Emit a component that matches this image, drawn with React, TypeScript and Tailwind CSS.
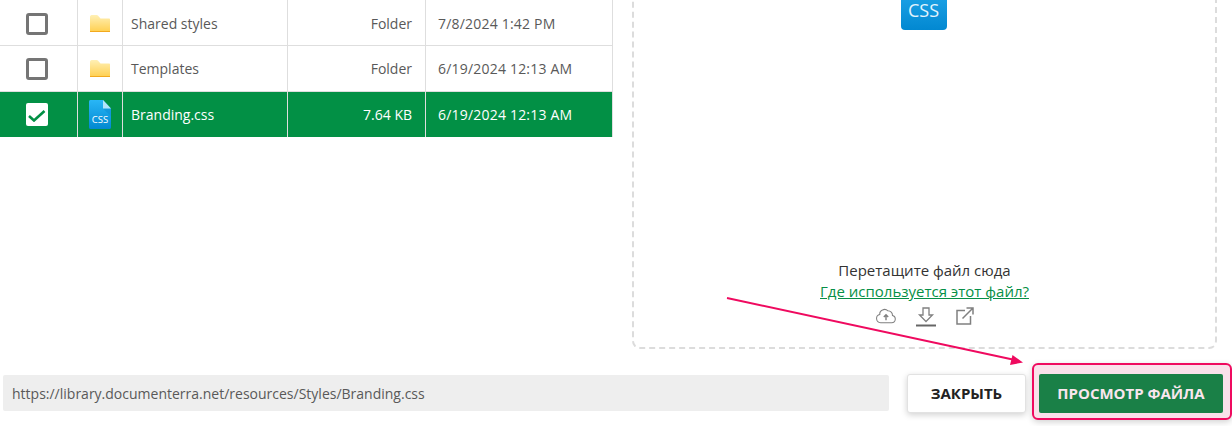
import { ReactNode } from "react";

const font = { fontFamily: '"Open Sans", "Noto Sans", sans-serif' };

function FolderIcon() {
  return (
    <svg width="20" height="17" viewBox="0 0 20 17">
      <defs>
        <linearGradient id="folderFill" x1="0" y1="0" x2="0" y2="1">
          <stop offset="0" stopColor="#fff0b5" />
          <stop offset="1" stopColor="#ffcf4f" />
        </linearGradient>
      </defs>
      <path d="M0 2C0 1 .6 0 1.600 0h5.200c.5 0 .8.2 1.100.5L10.500 3.500H19c.6 0 1 .4 1 1V16c0 .6-.4 1-1 1H1c-.6 0-1-.4-1-1z" fill="url(#folderFill)" />
      <path d="M0 16h20v1H0z" fill="#f2a91e" />
    </svg>
  );
}

function CssFileIcon() {
  return (
    <div className="relative flex h-[29px] w-[22px] items-end justify-center pb-[5px] text-[9.5px] leading-none text-white">
      <svg className="absolute inset-0" width="22" height="29" viewBox="0 0 22 29">
        <defs>
          <linearGradient id="cssFill" x1="0" y1="0" x2="0" y2="1">
            <stop offset="0" stopColor="#29b6f6" />
            <stop offset="1" stopColor="#0288d1" />
          </linearGradient>
        </defs>
        <path d="M1.500 0H14l8 8.500V27.500c0 .8-.7 1.500-1.500 1.500h-19C.7 29 0 28.300 0 27.500V1.500C0 .7.700 0 1.500 0z" fill="url(#cssFill)" />
        <path d="M14 8.500h8v8z" fill="#0f8fd6" opacity="0.6" />
        <path d="M14 0l8 8.500h-8z" fill="#b3e5fc" />
      </svg>
      <span className="relative">CSS</span>
    </div>
  );
}

function Checkbox({ checked }: { checked?: boolean }) {
  if (checked) {
    return (
      <div className="flex h-[23px] w-[22px] items-center justify-center rounded-[2px] bg-white">
        <svg width="18" height="14" viewBox="0 0 18 14" fill="none">
          <path d="M1 8l5 4.500L16.500 3" stroke="#029045" strokeWidth="2.600" />
        </svg>
      </div>
    );
  }
  return <div className="h-[22px] w-[22px] rounded-[3px] border-[3px] border-[#757575] bg-white" />;
}

type RowProps = {
  icon: ReactNode;
  name: string;
  size: string;
  date: string;
  checked?: boolean;
  className: string;
};

function Row({ icon, name, size, date, checked, className }: RowProps) {
  const selected = !!checked;
  return (
    <div
      className={`flex ${className} ${
        selected ? "bg-[#029045] font-medium text-white" : "border-b border-b-[#dedede] text-[#595959]"
      } text-[14px]`}
    >
      <div className="flex w-[78px] items-center justify-center border-r border-[#dedede] pr-[3px]">
        <Checkbox checked={checked} />
      </div>
      <div className="flex w-[45px] items-center justify-center border-r border-[#dedede]">{icon}</div>
      <div className="flex w-[165px] items-center border-r border-[#dedede] pl-[8px]">{name}</div>
      <div className="flex w-[138px] items-center justify-end border-r border-[#dedede] pr-[13px]">{size}</div>
      <div className="flex w-[187px] items-center border-r border-[#dedede] pl-[12px] tracking-[0.2px]">{date}</div>
    </div>
  );
}

export default function App() {
  return (
    <div className="relative h-[426px] w-[1232px] overflow-hidden bg-white" style={font}>
      <div className="flex h-[363px] items-start">
        <div className="w-[613px]">
          <Row className="h-[46px] [&>div]:pt-[2px]" icon={<FolderIcon />} name="Shared styles" size="Folder" date="7/8/2024 1:42 PM" />
          <Row className="h-[46px]" icon={<FolderIcon />} name="Templates" size="Folder" date="6/19/2024 12:13 AM" />
          <Row className="h-[45px]" icon={<CssFileIcon />} name="Branding.css" size="7.64 KB" date="6/19/2024 12:13 AM" checked />
        </div>

        <div className="-mt-[60px] ml-[19px] flex h-[409px] w-[585px] flex-col items-center rounded-[8px] border-2 border-dashed border-[#dcdcdc]">
          <div className="mt-[26px] -ml-[2px] flex h-[62px] w-[46px] items-end justify-center rounded-[4px] bg-gradient-to-b from-[#29b6f6] to-[#0288d1] pb-[11px] text-[18px] font-medium leading-none text-[#e3f4fd]">
            <span>CSS</span>
          </div>
          <div className="mt-auto mb-[20px] flex flex-col items-center">
            <div className="text-[15px] leading-[20px] text-[#333]">Перетащите файл сюда</div>
            <div className="text-[15px] leading-[22px] text-[#068f46] underline">Где используется этот файл?</div>
            <div className="mt-[5px] flex items-start gap-[20px] text-[#808080]">
              <svg className="mt-[1px]" width="20" height="16" viewBox="0 0 21 16" fill="none" stroke="currentColor" strokeWidth="1.100">
                <path d="M5 15h11.500a3.800 3.800 0 0 0 .8-7.500A4.800 4.800 0 0 0 12.500 2.500 5 5 0 0 0 6.800 1.700 4.500 4.500 0 0 0 4 6.500 4.300 4.300 0 0 0 5 15z" />
                <path d="M10.500 12.500V7M8.200 9l2.300-2.400L12.800 9" strokeWidth="1.500" />
              </svg>
              <svg width="20" height="20" viewBox="0 0 20 20" fill="none" stroke="currentColor">
                <path d="M7 1h6v7h3.500L10 14.500 3.500 8H7z" strokeWidth="1.300" />
                <path d="M0 18.500h20" strokeWidth="2" stroke="#666" />
              </svg>
              <svg width="18" height="18" viewBox="0 0 18 18" fill="none" stroke="currentColor" strokeWidth="1.500">
                <path d="M9 3.500H1v13.500h13.500V9" />
                <path d="M6.500 11.500L16.500 1.500M10.500 1h6.500v6.500" />
              </svg>
            </div>
          </div>
        </div>
      </div>

      <div className="flex items-start pl-[3px]">
        <div className="mt-[12px] flex h-[36px] w-[886px] items-center rounded-[2px] bg-[#eeeeee] pl-[9px] pt-[1px] text-[14px] text-[#595959]">
          https://library.documenterra.net/resources/Styles/Branding.css
        </div>
        <button className="ml-[18px] mt-[11px] h-[39px] w-[119px] rounded-[3px] border border-[#e2e2e2] bg-white text-[15px] font-bold text-[#222] shadow-[0_2px_6px_rgba(0,0,0,0.18)]">
          ЗАКРЫТЬ
        </button>
        <div className="ml-[6px] rounded-[6px] border-2 border-[#ef0a5f] bg-[#f9e1ea] pb-[5px] pl-[5px] pr-[7px] pt-[9px] shadow-[0_2px_6px_rgba(0,0,0,0.18)]">
          <button className="block h-[39px] w-[184px] rounded-[2px] bg-[#1a8047] text-[15px] font-bold text-[#f9e6ee]">
            ПРОСМОТР ФАЙЛА
          </button>
        </div>
      </div>

      <svg className="absolute left-[725px] top-[294px]" width="305" height="74" viewBox="0 0 305 74" fill="none">
        <path d="M2 4L290 66" stroke="#ef0a5f" strokeWidth="2" />
        <path d="M298 68.500L285 71L287.500 61z" fill="#ef0a5f" />
      </svg>
    </div>
  );
}
